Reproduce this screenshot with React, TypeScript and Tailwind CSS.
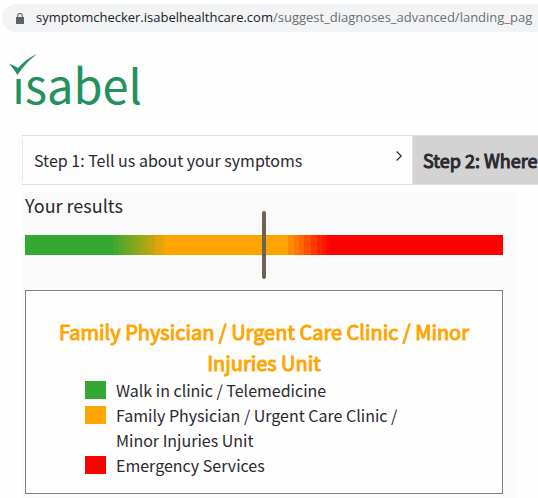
const scale = [
  { size: 89, color: "#35a833" },
  { size: 4, color: "#47a82e" },
  { size: 5, color: "#55a82a" },
  { size: 4, color: "#63a826" },
  { size: 4, color: "#70a823" },
  { size: 4, color: "#7ea820" },
  { size: 4, color: "#8ba81d" },
  { size: 4, color: "#99a81a" },
  { size: 5, color: "#aaa716" },
  { size: 7, color: "#bfa610" },
  { size: 7, color: "#dfa508" },
  { size: 3, color: "#f0a503" },
  { size: 123, color: "#ffa500" },
  { size: 6, color: "#ff8900" },
  { size: 5, color: "#ff7800" },
  { size: 5, color: "#ff6600" },
  { size: 7, color: "#ff5000" },
  { size: 6, color: "#ff3800" },
  { size: 5, color: "#ff2400" },
  { size: 4, color: "#ff1500" },
  { size: 3, color: "#ff0800" },
  { size: 174, color: "#ff0000" },
];

const legend = [
  { swatch: "bg-[#35a833]", label: "Walk in clinic / Telemedicine" },
  { swatch: "bg-[#ffa500]", label: "Family Physician / Urgent Care Clinic / Minor Injuries Unit" },
  { swatch: "bg-[#ff0000]", label: "Emergency Services" },
];

function AddressBar() {
  return (
    <div className="mt-1 ml-0.5 flex h-7 items-center gap-3 overflow-hidden rounded-l-full bg-[#f1f3f4] pl-3.5 font-['Open_Sans',sans-serif] text-[13px]">
      <svg viewBox="0 0 8 11" className="h-[11px] w-2 shrink-0" aria-hidden="true">
        <path d="M0 4h8v7H0z" fill="#5f6368" />
        <path d="M1.7 4.5V2.8a2.3 2.3 0 0 1 4.6 0v1.7" fill="none" stroke="#5f6368" strokeWidth="1.1" />
      </svg>
      <span className="whitespace-nowrap text-[#6b6e72]">
        <span className="text-[#202124]">symptomchecker.isabelhealthcare.com</span>
        /suggest_diagnoses_advanced/landing_pag
      </span>
    </div>
  );
}

function Logo() {
  return (
    <a href="#" aria-label="isabel" className="relative mt-5 ml-3 block h-20 w-32 text-[#23915c]">
      <svg viewBox="0 0 28 22" className="absolute -left-[3px] top-[2px] h-[22px] w-7" aria-hidden="true">
        <path d="M0 9.500Q5 11.500 9 14Q18 4 28 0Q17 8 8.500 21Q4 14 0 9.500Z" fill="currentColor" />
      </svg>
      <span className="block pt-1.5 text-[47px] leading-[52px]">ısabel</span>
    </a>
  );
}

function Steps() {
  return (
    <nav className="mt-[3px] ml-[22px] flex h-[50px] overflow-hidden border-y border-[#dcdfdf] whitespace-nowrap">
      <button type="button" className="my-0.5 flex w-[390px] shrink-0 items-center justify-between border-l border-[#e8eaea] pr-2.5 pl-[11px] text-base">
        Step 1: Tell us about your symptoms
        <svg viewBox="0 0 6 10" className="mb-2 h-2.5 w-1.5" aria-hidden="true">
          <path d="M.7.5 5.200 5 .7 9.500" fill="none" stroke="currentColor" strokeWidth="1.2" />
        </svg>
      </button>
      <button type="button" aria-current="step" className="flex shrink-0 grow items-center border-l border-[#dcdfdf] bg-[#d3d3d3] pl-2.5 text-lg [-webkit-text-stroke:1px]">
        Step 2: Where
      </button>
    </nav>
  );
}

export default function App() {
  return (
    <div className="overflow-hidden bg-[#fefefe] font-['Noto_Sans_CJK_SC',sans-serif] text-[#2b292e]">
      <AddressBar />
      <Logo />
      <Steps />
      <main className="mx-[22px] mt-[7px] bg-[#fafafa] pr-[13px] pb-5 pl-[3px]">
        <h1 className="pt-px text-lg leading-[25px]">Your results</h1>
        <div className="relative mt-[17px] flex h-5">
          {scale.map((band) => (
            <span key={band.color} className="basis-0" style={{ flexGrow: band.size, backgroundColor: band.color }} />
          ))}
          <span className="absolute -top-6 left-1/2 h-[68px] w-1 -translate-x-1/2 rounded-sm bg-[#6c6353]" />
        </div>
        <section className="mt-[35px] border border-[#808080] bg-[#fefefe] px-5 pt-[25px] pb-[15px]">
          <h2 className="text-center text-xl leading-[31px] text-[#ffa500] [-webkit-text-stroke:1px]">
            Family Physician / Urgent Care Clinic / Minor Injuries Unit
          </h2>
          <ul className="mx-[39px] text-base leading-[25px]">
            {legend.map((item) => (
              <li key={item.label} className="flex gap-2.5">
                <span className={"mt-[3px] h-[18px] w-[21px] shrink-0 " + item.swatch} />
                <span className="max-w-[300px]">{item.label}</span>
              </li>
            ))}
          </ul>
        </section>
      </main>
    </div>
  );
}
